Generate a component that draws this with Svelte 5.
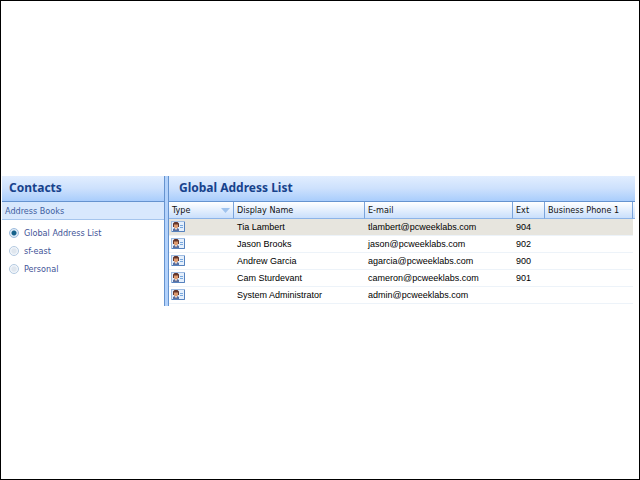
<script lang="ts">
	type Contact = {
		name: string
		email: string
		ext: string
		phone: string
	}

	const books = ['Global Address List', 'sf-east', 'Personal']

	const contacts: Contact[] = [
		{ name: 'Tia Lambert', email: 'tlambert@pcweeklabs.com', ext: '904', phone: '' },
		{ name: 'Jason Brooks', email: 'jason@pcweeklabs.com', ext: '902', phone: '' },
		{ name: 'Andrew Garcia', email: 'agarcia@pcweeklabs.com', ext: '900', phone: '' },
		{ name: 'Cam Sturdevant', email: 'cameron@pcweeklabs.com', ext: '901', phone: '' },
		{ name: 'System Administrator', email: 'admin@pcweeklabs.com', ext: '', phone: '' },
	]

	let book = $state(books[0])
	let selected = $state(0)
</script>

<div class="page">
	<div class="contacts">
		<aside>
			<h2>Contacts</h2>
			<h3 id="books">Address Books</h3>
			<div class="books" role="radiogroup" aria-labelledby="books">
				{#each books as name}
					<label>
						<input type="radio" name="book" value={name} bind:group={book} />
						{name}
					</label>
				{/each}
			</div>
		</aside>

		<div class="splitter"></div>

		<main>
			<h2>{book}</h2>
			<div class="list">
				<table>
					<colgroup>
						<col class="type" />
						<col class="name" />
						<col class="email" />
						<col class="ext" />
						<col />
					</colgroup>
					<thead>
						<tr>
							<th>
								<div class="sort">
									Type
									<svg width="9" height="5" viewBox="0 0 9 5"><path d="M0 0h9L4.500 5z" fill="#9fc3ee" /></svg>
								</div>
							</th>
							<th>Display Name</th>
							<th>E-mail</th>
							<th>Ext</th>
							<th>Business Phone 1</th>
						</tr>
					</thead>
					<tbody>
						{#each contacts as contact, i}
							<tr class:selected={selected === i} onclick={() => (selected = i)}>
								<td class="icon">
									<svg width="14" height="11" viewBox="0 0 14 11">
										<rect x=".5" y=".5" width="13" height="10" fill="#e4effc" stroke="#9dbbe2" />
										<path d="M13.500 1v9.500H1" fill="none" stroke="#5682be" />
										<path d="M2 10V8l2-1h2l2 1v2z" fill="#5a6f9f" />
										<path d="M4 7h2v1L5 9 4 8z" fill="#f3d6bd" />
										<rect x="3" y="2" width="4" height="5" rx="1" fill="#dc9a70" />
										<path d="M2 6V2.500L3.500 1h3L8 2.500V6H7V3.500H3V6z" fill="#63352b" />
										<path d="M9 4.500h3M9 6.500h3" stroke="#79a8dd" />
									</svg>
								</td>
								<td>{contact.name}</td>
								<td>{contact.email}</td>
								<td>{contact.ext}</td>
								<td>{contact.phone}</td>
							</tr>
						{/each}
					</tbody>
				</table>
			</div>
		</main>
	</div>
</div>

<style>
	:global(body) {
		background: #fff;
	}

	.page {
		box-sizing: border-box;
		min-height: 100vh;
		padding: 175px 4px 24px 1px;
		border: 1px solid #000;
		font-family: "DejaVu Sans Condensed", "Open Sans", sans-serif;
		font-size: 9px;
	}

	.contacts {
		display: flex;
	}

	aside {
		flex: 0 0 162px;
	}

	main {
		flex: 1;
		min-width: 0;
	}

	h2 {
		box-sizing: border-box;
		height: 26px;
		margin: 0;
		padding-left: 7px;
		border-bottom: 1px solid #6593cf;
		background: linear-gradient(#e2eeff, #cde1fd 50%, #a9cdfc);
		color: #17428c;
		font-family: "Noto Sans", sans-serif;
		font-size: 12px;
		font-weight: bold;
		line-height: 24px;
	}

	main h2 {
		padding-left: 10px;
	}

	h3 {
		box-sizing: border-box;
		height: 18px;
		margin: 0;
		padding-left: 3px;
		border-bottom: 1px solid #a5c5ed;
		background: #d8e8fd;
		color: #3f5f9f;
		font-size: 9px;
		font-weight: normal;
		line-height: 18px;
	}

	.books {
		display: flex;
		flex-direction: column;
		padding: 4px 0 0 7px;
	}

	label {
		display: flex;
		align-items: center;
		gap: 5px;
		height: 18px;
		color: #3f5497;
	}

	input {
		appearance: none;
		box-sizing: border-box;
		width: 10px;
		height: 10px;
		margin: 0;
		border: 1px solid #b3c9e0;
		border-radius: 50%;
		background: radial-gradient(circle, #dfe6ee 2px, #f8fbff 4px);
	}

	input:checked {
		border-color: #9dbbdc;
		background: radial-gradient(circle, #15618a 2px, #dceaf7 3px);
	}

	.splitter {
		box-sizing: border-box;
		flex: 0 0 5px;
		border: solid #6593cf;
		border-width: 0 1px;
		background: #b3d2fb;
	}

	.list {
		padding: 0 2px 2px 0;
		background: linear-gradient(#fff, #c9dffc 16px, #8db4e8 16px, #8db4e8 17px, #fff 17px);
	}

	table {
		width: 100%;
		border-collapse: separate;
		border-spacing: 0;
		table-layout: fixed;
		color: #111;
	}

	.type {
		width: 65px;
	}

	.name {
		width: 131px;
	}

	.email {
		width: 148px;
	}

	.ext {
		width: 32px;
	}

	th {
		box-sizing: border-box;
		height: 17px;
		padding: 0 0 0 3px;
		border-right: 1px solid #7ba4db;
		border-bottom: 1px solid #8db4e8;
		font-weight: normal;
		line-height: 16px;
		text-align: left;
		white-space: nowrap;
	}

	.sort {
		display: flex;
		align-items: center;
		justify-content: space-between;
		padding-right: 3px;
	}

	td {
		box-sizing: border-box;
		height: 17px;
		padding: 0 0 0 3px;
		border-bottom: 1px solid #edf3f9;
		color: #000;
		font-family: "Liberation Sans", Arial, sans-serif;
		font-size: 9px;
		line-height: 16px;
		white-space: nowrap;
	}

	.icon {
		padding: 2px 0 0 2px;
		vertical-align: top;
	}

	td svg {
		display: block;
	}

	.selected td {
		background: #e7e5de;
	}
</style>
